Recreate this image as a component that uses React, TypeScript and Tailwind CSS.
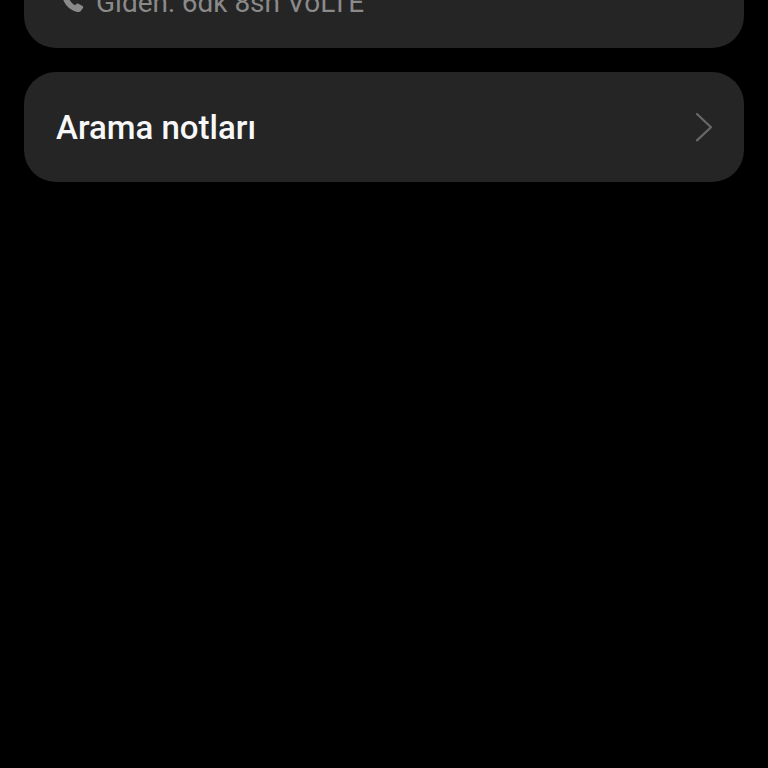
const lastCall = { direction: "Giden", duration: "6dk 8sn", network: "VoLTE" };

function PhoneIcon() {
  return (
    <svg viewBox="0 0 24 24" className="size-6 shrink-0 fill-current" aria-hidden="true">
      <path d="M3.600 3.400L7 0.900C7.700 0.500 8.400 0.700 8.800 1.400L11.200 5.400C11.600 6.100 11.400 6.800 10.900 7.300L9.600 8.600C10.600 11 12.600 13 15.200 14.200L16.400 13C17 12.500 17.700 12.400 18.300 12.700L22.500 15C23.200 15.500 23.400 16.200 23 16.900L21.200 19.400C20.200 20.800 18.400 21.300 16.400 20.800C9.800 18.900 4.800 14 2.700 7.500C2.200 5.800 2.300 4.400 3.600 3.400Z" />
    </svg>
  );
}

function ChevronIcon() {
  return (
    <svg
      viewBox="0 0 18 30"
      className="h-[30px] w-[18px] shrink-0"
      fill="none"
      stroke="#686868"
      strokeWidth="2.2"
      strokeLinecap="round"
      aria-hidden="true"
    >
      <path d="M3 2L17 15.200L3 28.400" />
    </svg>
  );
}

export default function App() {
  return (
    <main className="min-h-screen bg-black px-6 font-[Roboto,sans-serif]">
      <section className="h-12 overflow-hidden rounded-b-[32px] bg-[#252525] px-9">
        <div className="-mt-3 flex items-center gap-3 text-[#8a8a8a]">
          <PhoneIcon />
          <p className="text-[28px] leading-[30px]">
            {lastCall.direction}: {lastCall.duration} {lastCall.network}
          </p>
        </div>
      </section>

      <button
        type="button"
        className="mt-6 flex h-[110px] w-full items-center justify-between rounded-[32px] bg-[#252525] px-8 text-left"
      >
        <span className="pt-0.5 text-[33px] leading-10 font-medium text-[#f8f8f8]">Arama notları</span>
        <ChevronIcon />
      </button>
    </main>
  );
}
